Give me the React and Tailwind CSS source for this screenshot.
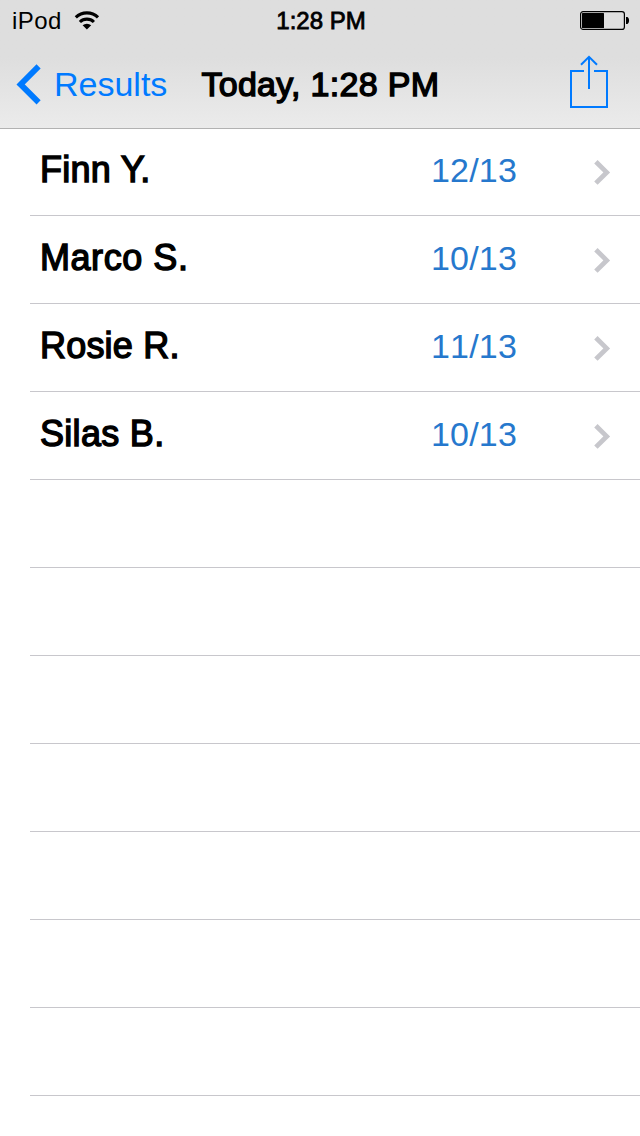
import React from 'react';

const results = [
  { name: 'Finn Y.', score: '12/13', nameStyle: 'tracking-[0.25px]' },
  { name: 'Marco S.', score: '10/13', nameStyle: 'tracking-[0.55px]' },
  { name: 'Rosie R.', score: '11/13', nameStyle: 'tracking-[0.2px]' },
  { name: 'Silas B.', score: '10/13', nameStyle: 'tracking-[0.3px]' },
];

const emptyRows = 7;

function WifiIcon() {
  return (
    <svg width="26" height="20" viewBox="0 0 26 20" fill="none" stroke="black" strokeWidth="3.1">
      <path d="M1.8 6.4 A15.8 15.8 0 0 1 24 6.4" />
      <path d="M5.9 11 A10 10 0 0 1 19.9 11" />
      <path d="M12.9 18.4 L8.6 14.3 A6.4 6.4 0 0 1 17.2 14.3 Z" fill="black" stroke="none" />
    </svg>
  );
}

function BatteryIcon() {
  return (
    <svg width="50" height="20" viewBox="0 0 50 20">
      <rect x="0.6" y="0.6" width="43.8" height="17.8" rx="2.5" fill="none" stroke="black" strokeWidth="1.2" />
      <rect x="2" y="2" width="22" height="15" rx="0.5" fill="black" />
      <path d="M46 6 H47.5 C49.6 7.5 49.6 11.5 47.5 13 H46 Z" fill="black" />
    </svg>
  );
}

function BackIcon() {
  return (
    <svg width="26" height="42" viewBox="0 0 26 42" fill="none" stroke="#007aff" strokeWidth="5.8">
      <path d="M22.6 3.4 L4.6 21.4 L22.6 39.4" />
    </svg>
  );
}

function ShareIcon() {
  return (
    <svg width="40" height="54" viewBox="0 0 40 54" fill="none" stroke="#007aff" strokeWidth="2">
      <path d="M15 16 H2 V52 H38 V16 H25" />
      <path d="M20 34 V2" />
      <path d="M12 9.8 L20 1.8 L28 9.8" />
    </svg>
  );
}

function DisclosureIcon() {
  return (
    <svg width="18" height="26" viewBox="0 0 18 26" fill="none" stroke="#c7c7cc" strokeWidth="4.8">
      <path d="M2.9 2.7 L13.7 13.4 L2.9 24.1" />
    </svg>
  );
}

function StatusBar() {
  return (
    <div className="grid grid-cols-3 items-center h-10 pl-3 pr-[10px] text-[24px] leading-[40px]">
      <div className="flex items-center gap-3 pt-[2px]">
        <span className="-mt-px tracking-[0.4px]">iPod</span>
        <span className="-mt-[2px]">
          <WifiIcon />
        </span>
      </div>
      <div className="pt-px text-center whitespace-nowrap [-webkit-text-stroke:0.8px_black]">1:28 PM</div>
      <div className="flex justify-end">
        <BatteryIcon />
      </div>
    </div>
  );
}

function NavBar() {
  return (
    <div className="flex items-center h-[88px] pl-4 pr-[31px] text-[34px] leading-[40px]">
      <button className="flex items-center text-[#007aff]">
        <BackIcon />
        <span className="ml-3">Results</span>
      </button>
      <h1 className="ml-[34px] whitespace-nowrap tracking-[0.3px] [-webkit-text-stroke:1.4px_black]">Today, 1:28 PM</h1>
      <button className="ml-auto -mt-1">
        <ShareIcon />
      </button>
    </div>
  );
}

function ResultRow({ name, score, nameStyle }) {
  return (
    <li className="flex h-[88px] ml-[30px] pl-[10px] pr-[29px] border-b border-[#c8c7cc] items-center">
      <span className={`w-[391px] pb-1 text-[36px] leading-[44px] [-webkit-text-stroke:1.4px_black] ${nameStyle}`}>{name}</span>
      <span className="pb-1 text-[34px] leading-[44px] tracking-[0.2px] text-[#2678cd] [font-kerning:none]">{score}</span>
      <span className="ml-auto">
        <DisclosureIcon />
      </span>
    </li>
  );
}

function App() {
  return (
    <div className="w-full h-[1136px] overflow-hidden bg-white text-black font-['Liberation_Sans',Arial,sans-serif]">
      <header className="h-[129px] border-b border-[#b2b2b2] bg-linear-to-b from-[#dedede] from-45% to-[#ebebeb]">
        <StatusBar />
        <NavBar />
      </header>
      <ul className="-mt-px">
        {results.map((result) => (
          <ResultRow key={result.name} {...result} />
        ))}
        {Array.from({ length: emptyRows }, (_, i) => (
          <li key={i} className="h-[88px] ml-[30px] border-b border-[#c8c7cc]" />
        ))}
      </ul>
    </div>
  );
}

export default App;
